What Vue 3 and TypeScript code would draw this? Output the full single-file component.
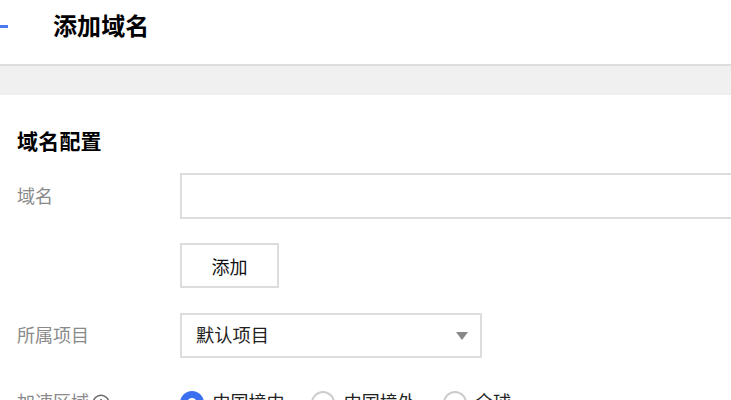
<script setup lang="ts">
const regions: { label: string; checked: boolean }[] = [
  { label: '中国境内', checked: true },
  { label: '中国境外', checked: false },
  { label: '全球', checked: false },
]
</script>

<template>
  <div class="page">
    <header class="header">
      <span class="back-line"></span>
      <h1 class="title">添加域名</h1>
    </header>
    <div class="band"></div>
    <main class="content">
      <h2 class="section">域名配置</h2>
      <div class="row row-domain">
        <label class="label">域名</label>
        <input class="input" type="text" />
      </div>
      <div class="row row-add">
        <span class="label"></span>
        <button class="btn" type="button">添加</button>
      </div>
      <div class="row row-project">
        <label class="label">所属项目</label>
        <div class="select">
          <span>默认项目</span>
          <span class="caret"></span>
        </div>
      </div>
      <div class="row row-region">
        <label class="label label-help">
          加速区域
          <svg class="help" viewBox="0 0 20 20" width="18" height="18">
            <circle cx="10" cy="10" r="8.7" fill="none" stroke="#666" stroke-width="1.6" />
            <path d="M10 5.6v1.8M10 9v5.4" stroke="#666" stroke-width="1.8" fill="none" />
          </svg>
        </label>
        <div class="radios">
          <div v-for="r in regions" :key="r.label" class="radio">
            <span class="dot" :class="{ on: r.checked }"></span>
            <span class="radio-text">{{ r.label }}</span>
          </div>
        </div>
      </div>
    </main>
  </div>
</template>

<style>
html, body { margin: 0; background: #fff; }
</style>

<style scoped>
.page {
  width: 731px;
  height: 400px;
  overflow: hidden;
  background: #fff;
  font-family: "Noto Sans CJK SC", "Liberation Sans", sans-serif;
  color: #000;
}
.header {
  height: 64px;
  display: flex;
  align-items: center;
  border-bottom: 2px solid #ddd;
  padding-left: 53px;
  position: relative;
  box-sizing: content-box;
}
.back-line {
  position: absolute;
  left: 0;
  top: 25px;
  width: 8px;
  height: 3px;
  background: #4a7bf0;
}
.title {
  margin: 0 0 14px;
  font-size: 24px;
  line-height: 32px;
  font-weight: 700;
  letter-spacing: 0.1px;
}
.band { height: 29px; background: #f0f0f0; }
.content { padding: 30px 0 0 17px; }
.section {
  margin: 0;
  font-size: 21px;
  line-height: 30px;
  font-weight: 700;
  letter-spacing: 0.2px;
}
.row { display: flex; }
.label {
  width: 163px;
  flex: none;
  font-size: 18px;
  color: #8a8a8a;
  line-height: 46px;
}
.label-help { display: flex; align-items: center; gap: 3px; height: 46px; margin-top: -2px; }
.help { margin-top: 4px; }
.row-domain { margin-top: 18px; }
.row-domain .label { margin-top: -1px; }
.input {
  width: 600px;
  height: 46px;
  box-sizing: border-box;
  border: 2px solid #ddd;
  background: #fff;
  flex: none;
  outline: none;
  padding: 0;
}
.row-add { margin-top: 24px; }
.btn {
  width: 99px;
  height: 45px;
  box-sizing: border-box;
  border: 2px solid #ddd;
  background: #fff;
  font: inherit;
  font-size: 18px;
  color: #111;
  padding: 0;
}
.row-project { margin-top: 25px; }
.row-project .label { margin-top: -2px; }
.select {
  width: 302px;
  height: 45px;
  box-sizing: border-box;
  border: 2px solid #ddd;
  display: flex;
  align-items: center;
  justify-content: space-between;
  padding: 0 12px 3px 14px;
  font-size: 18.25px;
  color: #222;
}
.caret {
  width: 0;
  height: 0;
  margin-top: 3px;
  border-left: 6.5px solid transparent;
  border-right: 6.5px solid transparent;
  border-top: 8px solid #888;
}
.row-region { margin-top: 22px; }
.radios { display: flex; gap: 26.75px; height: 46px; align-items: center; font-size: 18px; color: #222; }
.radio { display: flex; align-items: center; gap: 8.5px; }
.radio-text { margin-bottom: 4px; }
.dot {
  width: 24px;
  height: 24px;
  box-sizing: border-box;
  border: 2px solid #ccc;
  border-radius: 50%;
  background: #fff;
}
.dot.on { border: 7px solid #3a6ff0; }
</style>
